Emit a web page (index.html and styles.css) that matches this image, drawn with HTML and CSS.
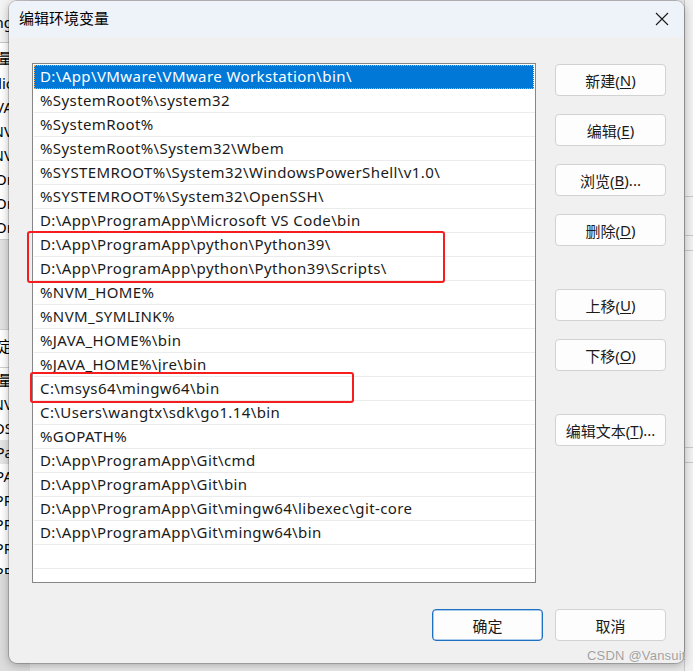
FILE: index.html
```html
<!DOCTYPE html>
<html lang="zh-CN">
<head>
<meta charset="utf-8">
<title>编辑环境变量</title>
<link rel="stylesheet" href="styles.css">
</head>
<body>
<div class="desk">
  <div class="bgwin">
    <div class="bg-row r-top">Setting</div>
    <div class="bg-row r-sep">环境变量</div>
    <div class="bg-row">Nodic</div>
    <div class="bg-row">JAVA</div>
    <div class="bg-row">NV</div>
    <div class="bg-row">NV</div>
    <div class="bg-row">Or</div>
    <div class="bg-row">Or</div>
    <div class="bg-row">Or</div>
    <div class="bg-gap"></div>
    <div class="bg-row r-sep2">确定</div>
    <div class="bg-row">变量</div>
    <div class="bg-row">NV</div>
    <div class="bg-row">OS</div>
    <div class="bg-row r-hl">Pa</div>
    <div class="bg-row">PA</div>
    <div class="bg-row">PR</div>
    <div class="bg-row">PR</div>
    <div class="bg-row">PR</div>
    <div class="bg-row r-cut">PR</div>
  </div>
  <div class="bgright">
    <div class="rr r1"></div>
    <div class="rr r2"></div>
    <div class="rr r3"></div>
    <div class="rr r4"></div>
    <div class="rr r5"></div>
  </div>

  <div class="dialog">
    <div class="titlebar">
      <span class="title">编辑环境变量</span>
      <svg class="close" width="14" height="14" viewBox="0 0 14 14"><path d="M1 1 L13 13 M13 1 L1 13" stroke="#1a1a1a" stroke-width="1.1" fill="none"/></svg>
    </div>
    <div class="content">
      <div class="main">
        <div class="list">
          <div class="row sel">D:\App\VMware\VMware Workstation\bin\</div>
          <div class="row">%SystemRoot%\system32</div>
          <div class="row">%SystemRoot%</div>
          <div class="row">%SystemRoot%\System32\Wbem</div>
          <div class="row">%SYSTEMROOT%\System32\WindowsPowerShell\v1.0\</div>
          <div class="row">%SYSTEMROOT%\System32\OpenSSH\</div>
          <div class="row">D:\App\ProgramApp\Microsoft VS Code\bin</div>
          <div class="row">D:\App\ProgramApp\python\Python39\</div>
          <div class="row">D:\App\ProgramApp\python\Python39\Scripts\</div>
          <div class="row">%NVM_HOME%</div>
          <div class="row">%NVM_SYMLINK%</div>
          <div class="row">%JAVA_HOME%\bin</div>
          <div class="row">%JAVA_HOME%\jre\bin</div>
          <div class="row">C:\msys64\mingw64\bin</div>
          <div class="row">C:\Users\wangtx\sdk\go1.14\bin</div>
          <div class="row">%GOPATH%</div>
          <div class="row">D:\App\ProgramApp\Git\cmd</div>
          <div class="row">D:\App\ProgramApp\Git\bin</div>
          <div class="row">D:\App\ProgramApp\Git\mingw64\libexec\git-core</div>
          <div class="row">D:\App\ProgramApp\Git\mingw64\bin</div>
          <div class="row"></div>
          <div class="row"></div>
        </div>
        <div class="side">
          <div class="btn">新建(<u>N</u>)</div>
          <div class="btn">编辑(<u>E</u>)</div>
          <div class="btn">浏览(<u>B</u>)...</div>
          <div class="btn">删除(<u>D</u>)</div>
          <div class="btn gap">上移(<u>U</u>)</div>
          <div class="btn">下移(<u>O</u>)</div>
          <div class="btn gap">编辑文本(<u>T</u>)...</div>
        </div>
      </div>
      <div class="footer">
        <div class="btn primary">确定</div>
        <div class="btn">取消</div>
      </div>
    </div>
  </div>

  <div class="mark m1"></div>
  <div class="mark m2"></div>
  <div class="watermark">CSDN @Vansuit</div>
</div>
</body>
</html>
```

FILE: styles.css
```css
* { box-sizing: border-box; }
html, body { margin: 0; padding: 0; }
body {
  font-family: "Noto Sans", "Noto Sans CJK SC", sans-serif;
  font-size: 15px;
  color: #000;
}
.desk {
  position: relative;
  width: 693px;
  height: 671px;
  overflow: hidden;
  background: #e9e9e9;
}

/* background window (left) */
.bgwin {
  position: absolute;
  left: -60px;
  top: 0;
  width: 90px;
  height: 671px;
  background: #fff;
  display: flex;
  flex-direction: column;
}
.bg-row {
  height: 24px;
  flex: none;
  line-height: 24px;
  text-align: right;
  padding-right: 17px;
  white-space: nowrap;
  font-size: 15px;
}
.r-top { height: 43px; line-height: 44px; border-bottom: 1px solid #c8c8c8; background: #f3f3f3; }
.r-sep { height: 28px; line-height: 30px; }
.r-sep2 { height: 38px; line-height: 32px; border-bottom: 1px solid #d0d0d0; }
.r-hl { background: #e6e6e6; }
.r-cut { height: 14px; }
.bg-gap {
  height: 91px;
  flex: none;
  background: #e2e2e2;
  border-top: 1px solid #cfcfcf;
  border-bottom: 1px solid #cfcfcf;
}
.bgwin::after {
  content: "";
  flex: 1;
  background: #dcdcdc;
}

/* background window (right) */
.bgright {
  position: absolute;
  left: 684px;
  top: 0;
  width: 9px;
  height: 671px;
  background: #f0f0f0;
  border-left: 1px solid #c9c9c9;
}
.rr { position: absolute; left: 0; right: 0; height: 1px; background: #c8c8c8; }
.r1 { top: 196px; }
.r2 { top: 235px; }
.r3 { top: 250px; }
.r4 { top: 447px; }
.r5 { top: 462px; }

/* dialog */
.dialog {
  position: absolute;
  left: 9px;
  top: 1px;
  width: 675px;
  height: 662px;
  background: #f0f0f0;
  border-radius: 8px;
  box-shadow: 0 0 0 1px rgba(0,0,0,0.18), 0 2px 10px rgba(0,0,0,0.3);
  overflow: hidden;
  display: flex;
  flex-direction: column;
}
.titlebar {
  height: 36px;
  flex: none;
  background: #eef2f9;
  display: flex;
  align-items: center;
  justify-content: space-between;
  padding: 0 15px 0 10px;
}
.title {
  font-family: "Noto Sans CJK SC", sans-serif;
  font-size: 15px;
  line-height: 1;
  margin-top: -3px;
}
.close { display: block; margin-top: -1px; }

.content {
  padding: 26px 18px 0 23px;
  display: flex;
  flex-direction: column;
}
.main {
  display: flex;
  gap: 19px;
  align-items: flex-start;
}
.list {
  width: 504px;
  height: 520px;
  background: #fff;
  border: 1px solid #868686;
  padding: 1px 0 0 1px;
  overflow: hidden;
}
.row {
  height: 24px;
  line-height: 23px;
  border-bottom: 1px solid #ececec;
  padding-left: 6px;
  white-space: nowrap;
  font-size: 15px;
  letter-spacing: 0.4px;
  color: #1a1a1a;
}
.row.sel {
  background: #0078d7;
  color: #fff;
  border: 1px dotted #e9a65a;
  border-right-color: #ffffff;
  line-height: 21px;
  padding-left: 5px;
  margin-right: 1px;
}

.side {
  width: 111px;
  margin-top: 1px;
  display: flex;
  flex-direction: column;
  gap: 18px;
}
.btn {
  height: 32px;
  width: 111px;
  background: #fdfdfd;
  border: 1px solid #d2d2d2;
  border-radius: 4px;
  display: flex;
  align-items: center;
  justify-content: center;
  font-size: 15px;
  color: #1a1a1a;
  white-space: nowrap;
}
.btn u { text-underline-offset: 2px; }
.btn.gap { margin-top: 25px; }

.footer {
  margin-top: 26px;
  display: flex;
  justify-content: flex-end;
  gap: 12px;
}
.btn.primary {
  border: 1px solid #1f6fc2;
  box-shadow: inset 0 0 0 0.5px #5b9ad8;
}

/* annotations */
.mark {
  position: absolute;
  border: 2px solid #f51d1d;
  border-radius: 3px;
}
.m1 { left: 27px; top: 231px; width: 418px; height: 52px; }
.m2 { left: 30px; top: 372px; width: 324px; height: 31px; }

.watermark {
  position: absolute;
  left: 587px;
  top: 648px;
  font-family: "Liberation Sans", sans-serif;
  font-size: 13px;
  letter-spacing: 0.2px;
  color: #a0a0a0;
  text-shadow: 0 0 1px #fff;
  white-space: nowrap;
}
```
